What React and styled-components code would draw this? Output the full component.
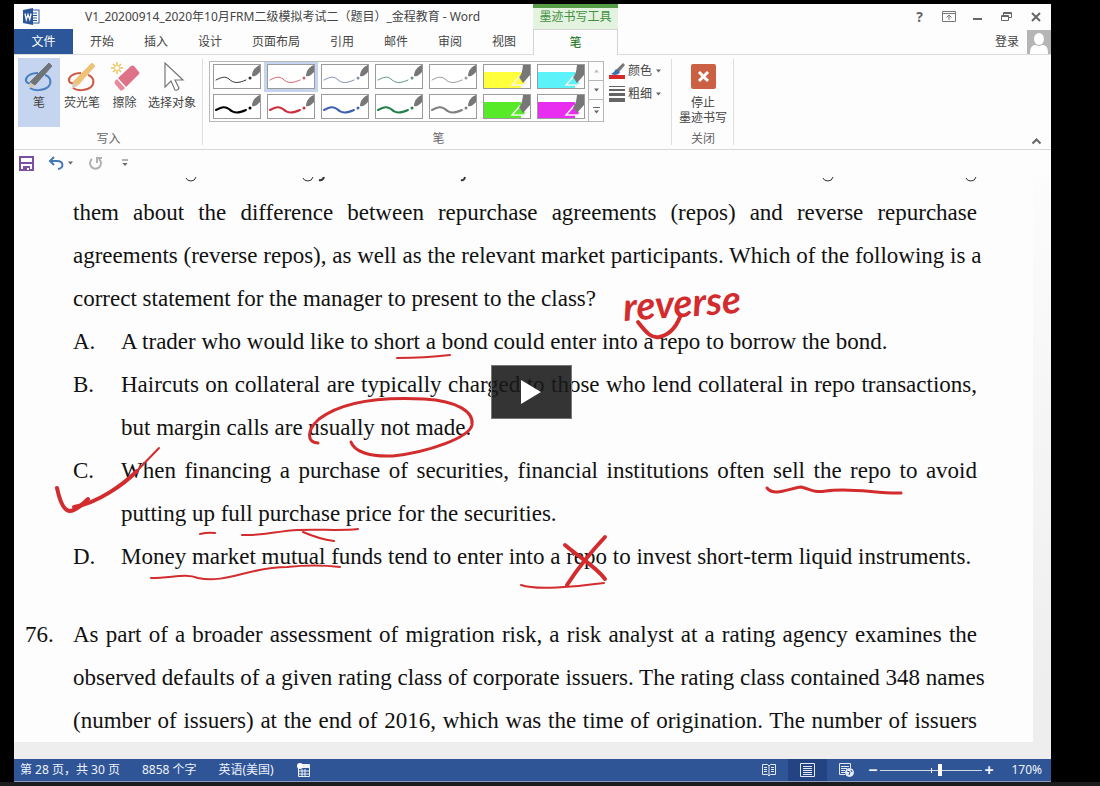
import React, { useState } from 'react'
import styled, { createGlobalStyle, css } from 'styled-components'

const uiFont = css`
  font-family: 'Noto Sans', 'Noto Sans CJK SC', sans-serif;
  font-size: 12px;
  line-height: 16px;
`
const ink = '#d32c2e'
const headerColumns = '519px 85px 1fr'

const GlobalStyle = createGlobalStyle`
  * { box-sizing: border-box; }
  body { margin: 0; background: #000; }
  button { border: 0; padding: 0; background: none; color: inherit; font: inherit; }
  h1, h2, p, ol { margin: 0; padding: 0; font: inherit; }
`

const Player = styled.main`
  min-height: 100vh;
  padding: 4px 49px 0 14px;
  border-bottom: 4px solid #1c1c1c;
  display: flex;
`
const WordWindow = styled.div`
  ${uiFont};
  flex: 1;
  min-width: 0;
  display: flex;
  flex-direction: column;
  background: #fdfdfd;
  color: #444;
  position: relative;
`

const TitleBar = styled.header`
  display: grid;
  grid-template-columns: ${headerColumns};
  height: 25px;
`
const TitleLeft = styled.div`
  display: flex;
  align-items: center;
  gap: 45px;
  padding-left: 9px;
`
const Title = styled.h1`
  white-space: nowrap;
`
const ContextTitle = styled.div`
  border-top: 4px solid #559c47;
  background: #e4f2e0;
  color: #3f9142;
  text-align: center;
  line-height: 18px;
`
const WindowButtons = styled.div`
  display: flex;
  justify-content: flex-end;
  align-items: center;
  padding-right: 1px;
`
const WindowButton = styled.button`
  width: 29px;
  height: 20px;
  display: grid;
  place-items: center;
  font-weight: 700;
  font-size: 14px;
  color: #666;
`

const TabRow = styled.nav`
  display: grid;
  grid-template-columns: ${headerColumns};
  height: 25px;
`
const Tabs = styled.div`
  display: flex;
  border-bottom: 1px solid #dcdcdc;
`
const Tab = styled.button`
  padding: 0 15px;
  white-space: nowrap;
`
const FileTab = styled.button`
  width: 59px;
  height: 25px;
  margin-right: 2px;
  background: #2b579a;
  color: #fff;
`
const ContextTab = styled.button`
  border: 1px solid #d4d4d4;
  border-bottom: 0;
  color: #2f7d32;
  font-weight: 500;
`
const Account = styled.div`
  display: flex;
  justify-content: flex-end;
  align-items: center;
  gap: 8px;
  border-bottom: 1px solid #dcdcdc;
`

const Ribbon = styled.section`
  display: flex;
  height: 96px;
  border-bottom: 1px solid #d8d8d8;
`
const Group = styled.div`
  display: flex;
  flex-direction: column;
  justify-content: space-between;
  align-items: center;
  padding: ${props => props.$pad || '4px 4px 2px'};
  position: relative;
  &::after {
    content: '';
    position: absolute;
    right: 0;
    top: 5px;
    bottom: 4px;
    border-right: 1px solid #dedede;
  }
`
const GroupLabel = styled.h2`
  color: #666;
`
const Tools = styled.div`
  display: flex;
`
const ToolButton = styled.button`
  width: ${props => props.$width}px;
  height: 69px;
  padding-top: 4px;
  display: flex;
  flex-direction: column;
  align-items: center;
  gap: 1px;
  white-space: nowrap;
  background: ${props => (props.$active ? '#c5d5ef' : 'none')};
`
const Gallery = styled.div`
  display: flex;
  border: 1px solid #b8b8b8;
  height: 61px;
`
const Pens = styled.div`
  display: grid;
  grid-template-columns: repeat(7, 54px);
`
const PenCell = styled.button`
  display: grid;
  place-items: center;
  background: ${props => (props.$active ? '#c5d5ef' : 'none')};
`
const Scroller = styled.div`
  width: 15px;
  display: grid;
  border-left: 1px solid #b8b8b8;
`
const ScrollButton = styled.button`
  display: grid;
  place-items: center;
  & + & {
    border-top: 1px solid #b8b8b8;
  }
`
const PenSettings = styled.div`
  display: flex;
  flex-direction: column;
  gap: 3px;
  margin: 0 6px 0 5px;
`
const SettingButton = styled.button`
  display: flex;
  align-items: center;
  gap: 3px;
  height: 20px;
  white-space: nowrap;
`
const CloseButton = styled.button`
  display: flex;
  flex-direction: column;
  align-items: center;
  padding-top: 6px;
  gap: 6px;
  line-height: 15px;
  width: 54px;
`
const Collapse = styled.button`
  margin: auto 9px 4px auto;
  display: grid;
`

const QuickAccess = styled.div`
  display: flex;
  align-items: center;
  gap: 14px;
  height: 26px;
  padding-left: 5px;
`
const QuickButton = styled.button`
  display: flex;
  align-items: center;
  gap: 3px;
`

const Canvas = styled.div`
  flex: 1;
  padding: 0 18px 17px 0;
  background: linear-gradient(#fcfcfc, #eeeeee 90%);
`
const Paper = styled.article`
  position: relative;
  height: 100%;
  padding: 15px 56px 0 11px;
  background: #fdfdfd;
  color: #111;
  font-family: 'Liberation Serif', serif;
  font-size: 23px;
  line-height: 43px;
`
const Question = styled.section`
  display: grid;
  grid-template-columns: 48px minmax(0, 1fr);
  & + & {
    margin-top: 35px;
  }
`
const Body = styled.div`
  grid-column: 2;
`
const Line = styled.span`
  display: block;
  white-space: nowrap;
  text-align: justify;
  text-align-last: ${props => (props.$last ? 'left' : 'justify')};
`
const Options = styled.ol`
  list-style: none;
`
const Option = styled.li`
  display: grid;
  grid-template-columns: 48px minmax(0, 1fr);
`
const InkLayer = styled.svg`
  position: absolute;
  left: 0;
  top: 0;
  pointer-events: none;
  fill: none;
  stroke: ${ink};
  stroke-linecap: round;
  stroke-linejoin: round;
`
const InkWord = styled.text`
  fill: ${ink};
  stroke: none;
  font: italic 700 39px Lato, sans-serif;
`

const StatusBar = styled.footer`
  display: flex;
  align-items: center;
  height: 23px;
  padding: 0 9px 0 6px;
  border-bottom: 1px solid #8b9cbd;
  background: #2f5597;
  color: #eef2fa;
`
const StatusItems = styled.div`
  display: flex;
  align-items: center;
  gap: 22px;
  margin-right: auto;
`
const ViewButton = styled.button`
  width: 39px;
  height: 22px;
  display: grid;
  place-items: center;
  background: ${props => (props.$active ? '#234382' : 'none')};
`
const ZoomButton = styled.button`
  width: 14px;
  font-size: 16px;
  font-weight: 700;
`
const ZoomSlider = styled.input`
  appearance: none;
  width: 102px;
  height: 14px;
  margin: 0;
  background:
    linear-gradient(#eef2fa, #eef2fa) center / 1px 5px no-repeat,
    linear-gradient(#d0d9ea, #d0d9ea) center / 100% 1px no-repeat;
  &::-webkit-slider-thumb {
    appearance: none;
    width: 4px;
    height: 12px;
    background: #fff;
  }
`
const ZoomValue = styled.output`
  width: 46px;
  text-align: right;
`
const PlayButton = styled.button`
  position: absolute;
  left: 50%;
  top: 50%;
  width: 81px;
  height: 54px;
  margin: -28px 0 0 -42px;
  display: grid;
  place-items: center;
  border: 1px solid #777;
  background: rgba(24, 24, 24, 0.88);
`

const Caret = ({ color = '#666' }) => (
  <svg width="7" height="4" viewBox="0 0 7 4">
    <path d="M1 0.500h5L3.500 3.500z" fill={color} />
  </svg>
)

const WordIcon = () => (
  <svg width="17" height="17" viewBox="0 0 17 17">
    <rect x="8" y="2" width="8" height="13" fill="#fff" stroke="#2b579a" />
    <path d="M10 5h4M10 7.500h4M10 10h4M10 12.500h4" stroke="#2b579a" />
    <path d="M0 2l10-2v17L0 15z" fill="#2b579a" />
    <path d="M2 5.500l1.300 6 1.700-5 1.700 5 1.400-6" fill="none" stroke="#fff" strokeWidth="1.300" />
  </svg>
)

const PenIcon = ({ loop, body }) => (
  <svg width="30" height="32" viewBox="0 0 30 32">
    <path
      d="M14 11C6 11 1 15 2 19q2 4 7 1M21 13c6 2 7 8 3 12-5 4-14 4-18 1"
      fill="none"
      stroke={loop}
      strokeWidth="2"
    />
    <path d="M25 1l3 3L11 23l-5-3z" fill={body} stroke={body} strokeLinejoin="round" />
    <path d="M6 20l5 4-6 2z" fill="#d8c8b0" />
  </svg>
)

const EraserIcon = () => (
  <svg width="30" height="32" viewBox="0 0 30 32">
    <path d="M7 0v12M1 6h12M3 2l8 8M11 2l-8 8" stroke="#e8c557" strokeWidth="1.500" />
    <circle cx="7" cy="6" r="2" fill="#fff" />
    <path d="M21 4q2-1 3 0l5 6q1 1 0 2L16 25l-8-9z" fill="#de7288" />
    <path d="M7 17l8 9-2 2q-2 1-3 0l-5-6q-1-1 0-3z" fill="#e68a9c" />
    <path d="M7 16l9 10" stroke="#fff" />
  </svg>
)

const CursorIcon = () => (
  <svg width="30" height="32" viewBox="0 0 30 32">
    <path
      d="M8 1v24l6-6 4 9q3 1 4-2l-4-8h8z"
      fill="#fff"
      stroke="#777"
      strokeWidth="1.200"
    />
  </svg>
)

const StrokePreview = ({ color, weight }) => (
  <svg width="48" height="25" viewBox="0 0 48 25">
    <rect x="0.500" y="0.500" width="47" height="24" fill="#fff" stroke="#9b9b9b" />
    <path
      d="M3 16c6-3 9-4 13-1 5 5 10 4 17 1"
      fill="none"
      stroke={color}
      strokeWidth={weight}
      strokeLinecap="round"
    />
    <circle cx="37" cy="14" r="1.500" fill={color} />
    <path d="M39 12c0-5 3-9 8-11v7c-3 3-5 5-8 4z" fill="#777" />
  </svg>
)

const HighlightPreview = ({ color }) => (
  <svg width="48" height="25" viewBox="0 0 48 25">
    <rect x="0.500" y="0.500" width="47" height="24" fill="#fff" stroke="#9b9b9b" />
    <path d="M1 8h37v16H1z" fill={color} />
    <path d="M29 21l8-9 6 7-2 2z" fill={color} stroke="#f4f4f4" strokeWidth="1.500" />
    <path d="M36 13q3-2 4-12h7v10l-7 8z" fill="#777" />
  </svg>
)

const pens = [
  { color: '#333', weight: 1 },
  { color: '#d9606a', weight: 1, active: true },
  { color: '#7d90b8', weight: 1 },
  { color: '#5c9a78', weight: 1 },
  { color: '#999', weight: 1 },
  { color: '#ffff3c', marker: true },
  { color: '#5cf2fa', marker: true },
  { color: '#000', weight: 2 },
  { color: '#cf2c3c', weight: 2 },
  { color: '#3c62b0', weight: 2 },
  { color: '#238048', weight: 2 },
  { color: '#808080', weight: 2 },
  { color: '#56ea28', marker: true },
  { color: '#e82cf0', marker: true },
]

const tools = [
  { label: '笔', width: 42, icon: <PenIcon loop="#4a7fc0" body="#6e7478" />, active: true },
  { label: '荧光笔', width: 44, icon: <PenIcon loop="#cc5a44" body="#eec378" /> },
  { label: '擦除', width: 41, icon: <EraserIcon /> },
  { label: '选择对象', width: 54, icon: <CursorIcon /> },
]

const stem = [
  'them about the difference between repurchase agreements (repos) and reverse repurchase',
  'agreements (reverse repos), as well as the relevant market participants. Which of the following is a',
  'correct statement for the manager to present to the class?',
]

const options = [
  ['A.', ['A trader who would like to short a bond could enter into a repo to borrow the bond.']],
  ['B.', [
    'Haircuts on collateral are typically charged to those who lend collateral in repo transactions,',
    'but margin calls are usually not made.',
  ]],
  ['C.', [
    'When financing a purchase of securities, financial institutions often sell the repo to avoid',
    'putting up full purchase price for the securities.',
  ]],
  ['D.', ['Money market mutual funds tend to enter into a repo to invest short-term liquid instruments.']],
]

const nextStem = [
  'As part of a broader assessment of migration risk, a risk analyst at a rating agency examines the',
  'observed defaults of a given rating class of corporate issuers. The rating class contained 348 names',
  '(number of issuers) at the end of 2016, which was the time of origination. The number of issuers',
]

// Word keeps its own line breaks, so a paragraph comes as a list of lines
const Paragraph = ({ lines, continues }) => (
  <p>
    {lines.map((line, i) => (
      <Line key={line} $last={!continues && i === lines.length - 1}>
        {line}
      </Line>
    ))}
  </p>
)

const Annotations = () => (
  <InkLayer width="1019" height="565" viewBox="14 176 1019 565">
    {/* tails of the line scrolled under the toolbar */}
    <g stroke="#333" strokeWidth="1" strokeLinecap="butt">
      <path d="M186 178q1 3 5 3t5-4M303 178q1 3 5 3t5-4M823 178q1 3 5 3t5-4M966 178q1 3 5 3t5-4" />
      <path d="M319 180q4 1 5-3M461 180q3 1 4-3" strokeWidth="2" />
    </g>
    <InkWord x="624" y="321" transform="rotate(-4 624 321)">reverse</InkWord>
    <path d="M638 322C648 335 652 338 659 337C670 335 676 327 680 317" strokeWidth="4" />
    <path d="M397 358Q425 358 450 355" strokeWidth="2" />
    <path
      d="M318 443C307 442 306 431 319 419C344 400 386 397 424 399C458 401 474 412 472 425C469 438 428 452 393 456C368 457 354 451 351 442"
      strokeWidth="3"
    />
    <path d="M57 488C60 502 64 511 70 511C75 511 83 504 88 499" strokeWidth="4" />
    <path d="M74 507C98 503 124 484 137 471" strokeWidth="4" />
    <path d="M132 476L159 448" strokeWidth="2" />
    <path d="M767 488C774 497 790 488 801 487C811 489 812 493 826 491C851 487 878 494 901 493" strokeWidth="3" />
    <path d="M200 534Q208 532 215 533M242 535C263 536 277 531 298 530S340 531 358 529M303 532Q319 539 334 541" strokeWidth="2" />
    <path d="M151 578C173 578 185 573 198 578C226 584 249 567 287 567Q315 564 340 567" strokeWidth="2" />
    <path d="M521 585C535 590 573 587 604 583" strokeWidth="2" />
    <path d="M565 545C580 558 595 566 605 579M605 537C591 552 578 568 567 585" strokeWidth="4" />
  </InkLayer>
)

const App = () => {
  const [zoom, setZoom] = useState(59)
  return (
    <Player>
      <GlobalStyle />
      <WordWindow>
        <TitleBar>
          <TitleLeft>
            <WordIcon />
            <Title>V1_20200914_2020年10月FRM二级模拟考试二（题目）_金程教育 - Word</Title>
          </TitleLeft>
          <ContextTitle>墨迹书写工具</ContextTitle>
          <WindowButtons>
            <WindowButton>?</WindowButton>
            <WindowButton aria-label="功能区显示选项">
              <svg width="14" height="11" fill="none" stroke="#777">
                <path d="M0.500 0.500h13v10H0.500zM0.500 2.500h13M7 9V4.500M4.500 6.500L7 4l2.500 2.500" />
              </svg>
            </WindowButton>
            <WindowButton aria-label="最小化">
              <svg width="10" height="10">
                <path d="M0 7h9" stroke="#666" strokeWidth="2" />
              </svg>
            </WindowButton>
            <WindowButton aria-label="还原">
              <svg width="11" height="11" fill="none" stroke="#666">
                <path d="M0.500 4.500h7v5h-7zM0.500 5.500h7M2.500 4V1.500h8v5H8M2.500 2.500h8" />
              </svg>
            </WindowButton>
            <WindowButton aria-label="关闭窗口">
              <svg width="10" height="10">
                <path d="M1 1l8 8M9 1L1 9" stroke="#666" strokeWidth="2" />
              </svg>
            </WindowButton>
          </WindowButtons>
        </TitleBar>

        <TabRow>
          <Tabs>
            <FileTab>文件</FileTab>
            {['开始', '插入', '设计', '页面布局', '引用', '邮件', '审阅', '视图'].map(name => (
              <Tab key={name}>{name}</Tab>
            ))}
          </Tabs>
          <ContextTab>笔</ContextTab>
          <Account>
            <button>登录</button>
            <svg width="24" height="24" viewBox="0 0 24 24">
              <rect width="24" height="24" fill="#b5b5b5" />
              <ellipse cx="12" cy="9" rx="5" ry="6" fill="#fff" />
              <path d="M3 24c0-7 2-9 6-9q3 2 6 0c4 0 6 2 6 9z" fill="#fff" />
            </svg>
          </Account>
        </TabRow>

        <Ribbon>
          <Group>
            <Tools>
              {tools.map(tool => (
                <ToolButton key={tool.label} $width={tool.width} $active={tool.active}>
                  {tool.icon}
                  {tool.label}
                </ToolButton>
              ))}
            </Tools>
            <GroupLabel>写入</GroupLabel>
          </Group>
          <Group $pad="7px 4px 2px 6px">
            <Tools>
              <Gallery>
                <Pens>
                  {pens.map(pen => (
                    <PenCell key={pen.color} $active={pen.active} aria-label="笔样式">
                      {pen.marker ? <HighlightPreview {...pen} /> : <StrokePreview {...pen} />}
                    </PenCell>
                  ))}
                </Pens>
                <Scroller>
                  <ScrollButton aria-label="向上">
                    <svg width="7" height="4">
                      <path d="M1 3.500h5L3.500 0.500z" fill="#bbb" />
                    </svg>
                  </ScrollButton>
                  <ScrollButton aria-label="向下">
                    <Caret />
                  </ScrollButton>
                  <ScrollButton aria-label="更多">
                    <svg width="7" height="7">
                      <path d="M0 0.500h7" stroke="#666" />
                      <path d="M1 3.500h5L3.500 6.500z" fill="#666" />
                    </svg>
                  </ScrollButton>
                </Scroller>
              </Gallery>
              <PenSettings>
                <SettingButton>
                  <svg width="16" height="17" viewBox="0 0 16 17">
                    <path d="M14 0l2 2-6 7-3-2z" fill="#777" />
                    <path d="M7 6l4 3q-1 3-6 3l-3-1q3-1 5-5z" fill="#3d6fb5" />
                    <rect y="12" width="16" height="4" fill="#d9282c" />
                  </svg>
                  颜色
                  <Caret />
                </SettingButton>
                <SettingButton>
                  <svg width="16" height="16" fill="#666">
                    <path d="M0 0h16v1H0zM0 3h16v2H0zM0 7h16v3H0zM0 12h16v4H0z" />
                  </svg>
                  粗细
                  <Caret />
                </SettingButton>
              </PenSettings>
            </Tools>
            <GroupLabel>笔</GroupLabel>
          </Group>
          <Group>
            <CloseButton>
              <svg width="25" height="25" viewBox="0 0 25 25">
                <rect width="25" height="25" rx="2" fill="#cb6142" />
                <path d="M8 8l9 9M17 8l-9 9" stroke="#fff" strokeWidth="3" />
              </svg>
              <span>
                停止
                <br />
                墨迹书写
              </span>
            </CloseButton>
            <GroupLabel>关闭</GroupLabel>
          </Group>
          <Collapse aria-label="折叠功能区">
            <svg width="11" height="8" fill="none">
              <path d="M1.500 6.500l4-4 4 4" stroke="#666" strokeWidth="2" />
            </svg>
          </Collapse>
        </Ribbon>

        <QuickAccess>
          <QuickButton aria-label="保存">
            <svg width="15" height="15" viewBox="0 0 15 15">
              <path d="M1 1h13v13H1z" fill="#fff" stroke="#7c4fa3" strokeWidth="2" />
              <path d="M2 7h11" stroke="#7c4fa3" strokeWidth="2" />
              <path d="M4 10h7v4H4z" fill="#7c4fa3" />
              <path d="M8 12h2v2H8z" fill="#fff" />
            </svg>
          </QuickButton>
          <QuickButton aria-label="撤消">
            <svg width="16" height="14" viewBox="0 0 16 14" fill="none" stroke="#4378b8" strokeWidth="2">
              <path d="M6 1L2 5l4 4M2 5h7c7 0 7 7 1 8" />
            </svg>
            <Caret />
          </QuickButton>
          <QuickButton aria-label="重复">
            <svg width="15" height="15" viewBox="0 0 15 15" fill="none" stroke="#b0b0b0" strokeWidth="2">
              <path d="M4 3a5.500 5.500 0 1 0 7 0M9 7V2h5" />
            </svg>
          </QuickButton>
          <QuickButton aria-label="自定义快速访问工具栏">
            <svg width="15" height="8">
              <path d="M5 1h6" stroke="#666" />
              <path d="M5.500 4h5L8 7z" fill="#666" />
            </svg>
          </QuickButton>
        </QuickAccess>

        <Canvas>
          <Paper>
            <Question>
              <Body>
                <Paragraph lines={stem} />
                <Options>
                  {options.map(([letter, lines]) => (
                    <Option key={letter}>
                      <span>{letter}</span>
                      <Paragraph lines={lines} />
                    </Option>
                  ))}
                </Options>
              </Body>
            </Question>
            <Question>
              <span>76.</span>
              <Paragraph lines={nextStem} continues />
            </Question>
            <Annotations />
          </Paper>
        </Canvas>

        <StatusBar>
          <StatusItems>
            <span>第 28 页，共 30 页</span>
            <span>8858 个字</span>
            <span>英语(美国)</span>
            <svg width="15" height="14" viewBox="0 0 15 14">
              <path d="M2.500 4v9.500h11v-12H6" fill="none" stroke="#eef2fa" />
              <path d="M6 2h8v3H6z" fill="#eef2fa" />
              <path d="M3 8h10M3 11h10M6 6v7M9 6v7" stroke="#eef2fa" />
              <circle cx="4" cy="3" r="3" fill="#fff" />
            </svg>
          </StatusItems>
          <ViewButton aria-label="阅读视图">
            <svg width="14" height="14" viewBox="0 0 14 14" fill="none" stroke="#e3e9f5">
              <path d="M0.500 1.500h5L7 3l1.500-1.500h5v10h-5L7 13l-1.500-1.500h-5zM7 3v10M2 4.500h3M2 6.500h3M2 8.500h3M9 4.500h3M9 6.500h3M9 8.500h3" />
            </svg>
          </ViewButton>
          <ViewButton $active aria-label="页面视图">
            <svg width="15" height="14" fill="none" stroke="#e3e9f5">
              <path d="M0.500 0.500h14v13H0.500zM3 3.500h9M3 5.500h9M3 7.500h9M3 9.500h9M3 11.500h9" />
            </svg>
          </ViewButton>
          <ViewButton aria-label="Web 版式视图">
            <svg width="15" height="14" fill="none" stroke="#e3e9f5">
              <path d="M6 11.500H0.500v-11h11V5M2 3.500h8M2 5.500h6M2 7.500h4M2 9.500h4" />
              <circle cx="10.500" cy="9.500" r="4" fill="#e3e9f5" />
              <path d="M8 8l3 1-1 3M12 7l1 2" stroke="#2f5597" />
            </svg>
          </ViewButton>
          <ZoomButton aria-label="缩小">−</ZoomButton>
          <ZoomSlider
            type="range"
            aria-label="显示比例"
            value={zoom}
            onChange={e => setZoom(Number(e.target.value))}
          />
          <ZoomButton aria-label="放大">+</ZoomButton>
          <ZoomValue>170%</ZoomValue>
        </StatusBar>
        <PlayButton aria-label="播放">
          <svg width="20" height="24">
            <path d="M0 0l20 12L0 24z" fill="#fff" />
          </svg>
        </PlayButton>
      </WordWindow>
    </Player>
  )
}

export default App
